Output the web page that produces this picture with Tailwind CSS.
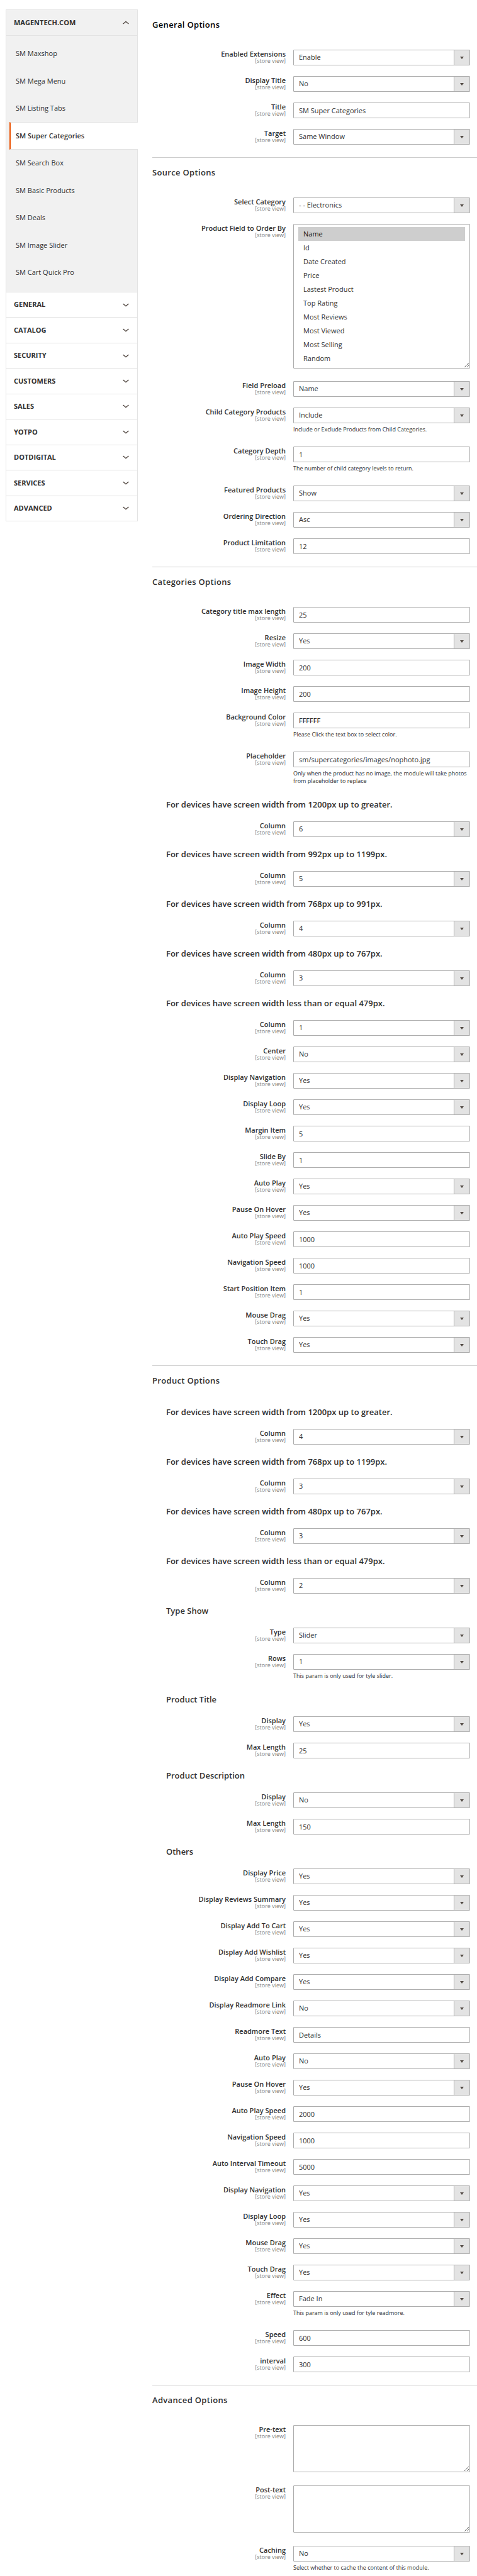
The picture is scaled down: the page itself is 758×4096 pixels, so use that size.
<!DOCTYPE html>
<html lang="en">
<head>
<meta charset="utf-8">
<meta name="viewport" content="width=device-width, initial-scale=1">
<title>SM Super Categories</title>
<script src="https://cdn.jsdelivr.net/npm/@tailwindcss/browser@4"></script>
</head>
<body class="bg-white font-['Open_Sans','Noto_Sans',sans-serif] text-[11px] text-[#303030]">
<div class="flex items-start gap-[23px] pl-[9px]">
  <nav id="sidebar" aria-label="Configuration" class="mt-[15px] w-[210px] shrink-0 border border-[#e3e3e3]"></nav>
  <main id="form" class="min-w-0 flex-1 pb-[6px]"></main>
</div>
<script>
const chevron = (d) => `<svg class="h-[6px] w-[10px]" viewBox="0 0 10 6" fill="none" stroke="#41362f" stroke-width="1.2" aria-hidden="true"><path d="${d}"/></svg>`;
const up = chevron('M.6 5 5 1.2 9.4 5');
const down = chevron('M.6 1 5 4.8 9.4 1');

const modules = ['SM Maxshop', 'SM Mega Menu', 'SM Listing Tabs', 'SM Super Categories', 'SM Search Box', 'SM Basic Products', 'SM Deals', 'SM Image Slider', 'SM Cart Quick Pro'];
const groups = ['GENERAL', 'CATALOG', 'SECURITY', 'CUSTOMERS', 'SALES', 'YOTPO', 'DOTDIGITAL', 'SERVICES', 'ADVANCED'];

document.getElementById('sidebar').innerHTML = `
  <button type="button" aria-expanded="true" class="flex h-[41px] w-full items-center justify-between border-b border-[#e3e3e3] bg-[#f1f1f1] pr-[13px] pl-3 text-[11px] font-bold">MAGENTECH.COM${up}</button>
  <ul class="grid min-h-[407px] auto-rows-fr bg-[#f1f1f1] pt-[7px] pb-[9px] pl-[5px]">
    ${modules.map((m) => m === 'SM Super Categories'
      ? `<li class="-mr-px flex"><a href="#" aria-current="page" class="flex flex-1 items-center border-y border-l-2 border-y-[#e3e3e3] border-l-[#eb5202] bg-white pl-2 font-semibold">${m}</a></li>`
      : `<li class="flex"><a href="#" class="flex flex-1 items-center pl-[10px]">${m}</a></li>`).join('')}
  </ul>
  <div class="grid min-h-[364px] auto-rows-fr">
    ${groups.map((g) => `<button type="button" aria-expanded="false" class="flex items-center justify-between border-t border-[#e3e3e3] pr-[13px] pl-3 text-[11px] font-bold">${g}${down}</button>`).join('')}
  </div>`;

/* Field kinds: s = drop-down, t = text box, m = multiple choice, a = text area, h = sub-heading */
const orders = ['Name', 'Id', 'Date Created', 'Price', 'Lastest Product', 'Top Rating', 'Most Reviews', 'Most Viewed', 'Most Selling', 'Random'];
const sections = [
  ['General Options', [
    ['s', 'Enabled Extensions', 'Enable'], ['s', 'Display Title', 'No'], ['t', 'Title', 'SM Super Categories'], ['s', 'Target', 'Same Window']]],
  ['Source Options', [
    ['s', 'Select Category', '- - Electronics'], ['m', 'Product Field to Order By', ''], ['s', 'Field Preload', 'Name'],
    ['s', 'Child Category Products', 'Include', 'Include or Exclude Products from Child Categories.'],
    ['t', 'Category Depth', '1', 'The number of child category levels to return.'],
    ['s', 'Featured Products', 'Show'], ['s', 'Ordering Direction', 'Asc'], ['t', 'Product Limitation', '12']]],
  ['Categories Options', [
    ['t', 'Category title max length', '25'], ['s', 'Resize', 'Yes'], ['t', 'Image Width', '200'], ['t', 'Image Height', '200'],
    ['t', 'Background Color', 'FFFFFF', 'Please Click the text box to select color.'],
    ['t', 'Placeholder', 'sm/supercategories/images/nophoto.jpg', 'Only when the product has no image, the module will take photos from placeholder to replace'],
    ['h', 'For devices have screen width from 1200px up to greater.'], ['s', 'Column', '6'],
    ['h', 'For devices have screen width from 992px up to 1199px.'], ['s', 'Column', '5'],
    ['h', 'For devices have screen width from 768px up to 991px.'], ['s', 'Column', '4'],
    ['h', 'For devices have screen width from 480px up to 767px.'], ['s', 'Column', '3'],
    ['h', 'For devices have screen width less than or equal 479px.'], ['s', 'Column', '1'],
    ['s', 'Center', 'No'], ['s', 'Display Navigation', 'Yes'], ['s', 'Display Loop', 'Yes'], ['t', 'Margin Item', '5'], ['t', 'Slide By', '1'],
    ['s', 'Auto Play', 'Yes'], ['s', 'Pause On Hover', 'Yes'], ['t', 'Auto Play Speed', '1000'], ['t', 'Navigation Speed', '1000'],
    ['t', 'Start Position Item', '1'], ['s', 'Mouse Drag', 'Yes'], ['s', 'Touch Drag', 'Yes']]],
  ['Product Options', [
    ['h', 'For devices have screen width from 1200px up to greater.'], ['s', 'Column', '4'],
    ['h', 'For devices have screen width from 768px up to 1199px.'], ['s', 'Column', '3'],
    ['h', 'For devices have screen width from 480px up to 767px.'], ['s', 'Column', '3'],
    ['h', 'For devices have screen width less than or equal 479px.'], ['s', 'Column', '2'],
    ['h', 'Type Show'], ['s', 'Type', 'Slider'], ['s', 'Rows', '1', 'This param is only used for tyle slider.'],
    ['h', 'Product Title'], ['s', 'Display', 'Yes'], ['t', 'Max Length', '25'],
    ['h', 'Product Description'], ['s', 'Display', 'No'], ['t', 'Max Length', '150'],
    ['h', 'Others'], ['s', 'Display Price', 'Yes'], ['s', 'Display Reviews Summary', 'Yes'], ['s', 'Display Add To Cart', 'Yes'],
    ['s', 'Display Add Wishlist', 'Yes'], ['s', 'Display Add Compare', 'Yes'], ['s', 'Display Readmore Link', 'No'], ['t', 'Readmore Text', 'Details'],
    ['s', 'Auto Play', 'No'], ['s', 'Pause On Hover', 'Yes'], ['t', 'Auto Play Speed', '2000'], ['t', 'Navigation Speed', '1000'],
    ['t', 'Auto Interval Timeout', '5000'], ['s', 'Display Navigation', 'Yes'], ['s', 'Display Loop', 'Yes'], ['s', 'Mouse Drag', 'Yes'],
    ['s', 'Touch Drag', 'Yes'], ['s', 'Effect', 'Fade In', 'This param is only used for tyle readmore.'], ['t', 'Speed', '600'], ['t', 'interval', '300']]],
  ['Advanced Options', [
    ['a', 'Pre-text', ''], ['a', 'Post-text', ''], ['s', 'Caching', 'No', 'Select whether to cache the content of this module.']]],
];

let count = 0;
const control = (kind, id, value) => ({
  s: `<div class="relative">
        <select id="${id}" class="block h-[25px] w-full appearance-none rounded-[1px] border border-[#adadad] bg-white pr-8 pl-2 text-[11px]"><option>${value}</option></select>
        <span class="pointer-events-none absolute inset-y-px right-px flex w-[25px] items-center justify-center border-l border-[#adadad] bg-[#e3e3e3]">
          <svg class="h-[4px] w-[6px]" viewBox="0 0 6 4" fill="#514943" aria-hidden="true"><path d="M0 0h6L3 4z"/></svg>
        </span>
      </div>`,
  t: `<input id="${id}" type="text" value="${value}" class="${value === 'FFFFFF' ? 'text-black ' : ''}block h-[25px] w-full rounded-[1px] border border-[#adadad] bg-white px-2 text-[11px]">`,
  m: `<select id="${id}" multiple size="10" class="mb-[3px] block h-[230px] w-full resize overflow-auto rounded-[1px] border border-[#adadad] bg-white px-[7px] py-1 text-[11px]">
        ${orders.map((o, i) => `<option class="h-[22px] min-h-[22px] px-2 py-[3px] leading-[16px]"${i ? '' : ' selected'}>${o}</option>`).join('')}
      </select>`,
  a: `<textarea id="${id}" class="mb-1 block h-[75px] w-full resize rounded-[1px] border border-[#adadad] bg-white px-2 py-1 text-[11px]"></textarea>`,
}[kind]);

const row = ([kind, label, value, note]) => {
  if (kind === 'h') return `<h3 class="flex h-[37px] items-start pt-px pl-[22px] text-[13px] leading-[18px] font-semibold">${label}</h3>`;
  const id = `field-${++count}`;
  return `<div class="mb-[17px] grid grid-cols-[212px_1fr] gap-3 pr-[11px]">
    <label for="${id}" class="text-right text-[11px] leading-[13px] font-semibold">${label}<span class="block text-[9px] leading-[10px] font-normal text-[#808080]">[store view]</span></label>
    <div class="min-w-0">${control(kind, id, value)}${note ? `<p class="mt-1 mb-1 text-[9px] leading-[12px]">${note}</p>` : ''}</div>
  </div>`;
};

document.getElementById('form').innerHTML = sections.map(([title, rows], i) => `
  <section class="${i ? 'mt-5 border-t border-[#cccccc]' : 'pt-4'}">
    <h2 class="${i ? '' : 'text-black '}flex h-[63px] items-start pt-[14px] text-[13px] leading-[18px] font-semibold tracking-wide">${title}</h2>
    <div>${rows.map(row).join('')}</div>
  </section>`).join('');
</script>
</body>
</html>
